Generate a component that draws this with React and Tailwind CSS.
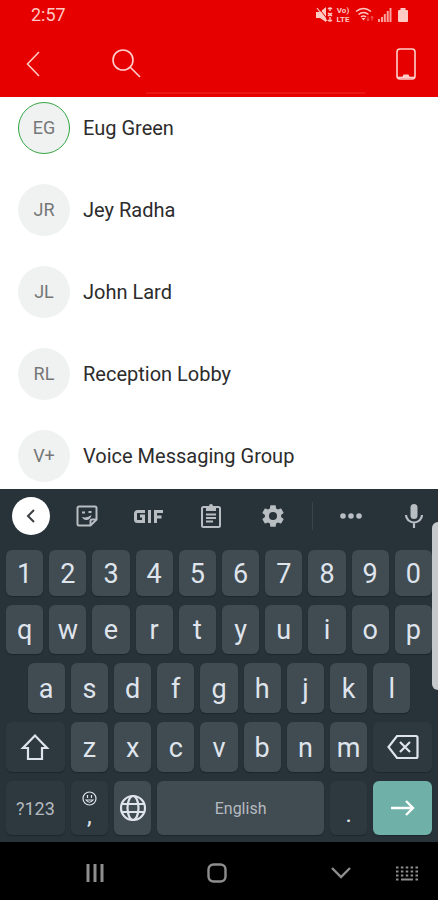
const contacts = [
  { initials: 'EG', name: 'Eug Green', online: true },
  { initials: 'JR', name: 'Jey Radha' },
  { initials: 'JL', name: 'John Lard' },
  { initials: 'RL', name: 'Reception Lobby' },
  { initials: 'V+', name: 'Voice Messaging Group' },
];

function StatusBar() {
  return (
    <div className="flex h-[30px] items-center justify-between pl-[31px] pr-[29px] text-[#ffc9c4]">
      <span className="text-lg leading-5">2:57</span>
      <div className="flex items-center">
        <svg width="17" height="16" viewBox="0 0 17 16" fill="currentColor">
          <path d="M0 5h4l6-5v15l-6-4H0z" />
          <path d="M2 0l10 13" stroke="#e60000" strokeWidth="1" />
          <path d="M1 1l10 13" stroke="currentColor" strokeWidth="1.200" />
          <path d="M12 2q2-2 4 0M12 6q2 2 4 0M12 9q2-2 4 0M12 13q2 2 4 0M14 1v3M14 10v3" fill="none" stroke="currentColor" strokeWidth="1.4" />
        </svg>
        <span className="ml-[2px] flex w-4 flex-col items-center text-[8px] leading-[9px] font-bold">
          <span>Vo)</span>
          <span>LTE</span>
        </span>
        <svg className="ml-1" width="20" height="16" viewBox="0 0 20 16" fill="none" stroke="currentColor" strokeWidth="1.6">
          <path d="M1 4.5q7.500-6 15 0M3.500 7.500q5-4 10 0M6 10q2.500-2 5 0" />
          <path d="M6.500 11h4l-2 2.500z" fill="currentColor" stroke="none" />
          <path d="M13 9.500v4M11.800 12.300l1.200 1.300 1.200-1.300M17 13.500v-4M15.800 10.700l1.200-1.300 1.200 1.300" strokeWidth="1" opacity=".5" />
        </svg>
        <svg className="ml-[3px]" width="14" height="16" viewBox="0 0 14 16" fill="currentColor">
          <path d="M0 12h2v3H0zM3 10h2v5H3zM5.800 7h2v8h-2zM8.700 4h2v11h-2zM11.500 1h2v14h-2z" opacity=".8" />
        </svg>
        <svg className="ml-[5px]" width="12" height="16" viewBox="0 0 12 16" fill="currentColor">
          <path d="M3.500 1h5v2h1.500a1 1 0 0 1 1 1v10a1 1 0 0 1-1 1H2a1 1 0 0 1-1-1V4a1 1 0 0 1 1-1h1.500z" />
        </svg>
      </div>
    </div>
  );
}

function SearchHeader() {
  return (
    <header className="bg-[#e60000]">
      <StatusBar />
      <div className="flex h-[67px] items-center pl-5 pr-[22px] text-[#ffd0cc]">
        <button type="button" aria-label="Back" className="flex w-7 justify-center">
          <svg width="16" height="26" viewBox="0 0 16 26" fill="none" stroke="currentColor" strokeWidth="1.5">
            <path d="M13 1L1.500 13 13 25" />
          </svg>
        </button>
        <label htmlFor="search" aria-label="Search" className="ml-16 shrink-0">
          <svg width="29" height="30" viewBox="0 0 29 30" fill="none" stroke="currentColor" strokeWidth="1.6">
            <circle cx="11" cy="11" r="10" />
            <path d="M18 18l10 10" />
          </svg>
        </label>
        <input id="search" type="text" className="mb-[3px] ml-[5px] min-w-0 flex-1 self-end border-b-2 border-[#ea1616] bg-transparent pb-1 text-lg text-white outline-none" />
        <button type="button" aria-label="Phone" className="ml-[31px]">
          <svg width="20" height="32" viewBox="0 0 20 32" fill="none" stroke="currentColor" strokeWidth="1.6">
            <rect x="1" y="1" width="18" height="30" rx="3" />
            <path d="M1 29.500h18" />
            <path d="M6 30l1.500-3.500h5L14 30z" fill="currentColor" stroke="none" />
          </svg>
        </button>
      </div>
    </header>
  );
}

function ContactList() {
  return (
    <ul className="flex flex-col gap-[30px] bg-white pt-[5px] pb-[7px]">
      {contacts.map((contact) => (
        <li key={contact.name}>
          <button type="button" className="flex w-full items-center pl-[18px] text-left">
            <span
              className={`flex size-[52px] items-center justify-center rounded-full bg-[#f0f2f2] text-lg text-[#757777] ${
                contact.online ? 'border border-[#35a544]' : ''
              }`}
            >
              {contact.initials}
            </span>
            <span className="ml-[13px] text-xl text-[#2c2c2c]">{contact.name}</span>
          </button>
        </li>
      ))}
    </ul>
  );
}

function KeyboardToolbar() {
  return (
    <div className="grid h-[61px] grid-cols-[62fr_50fr_72fr_54fr_70fr_8fr_70fr_52fr] items-center justify-items-center pb-[7px] text-[#b8bec2]">
      <button type="button" aria-label="Close toolbar" className="flex size-[38px] items-center justify-center rounded-full bg-white text-[#3c4043]">
        <svg width="10" height="14" viewBox="0 0 10 14" fill="none" stroke="currentColor" strokeWidth="2">
          <path d="M8 1L2 7l6 6" />
        </svg>
      </button>
      <button type="button" aria-label="Stickers">
        <svg width="22" height="22" viewBox="0 0 22 22" fill="none" stroke="currentColor" strokeWidth="2">
          <path d="M3 1.500h16a1.500 1.500 0 0 1 1.500 1.500v11.500L14.500 20.500H3A1.500 1.500 0 0 1 1.500 19V3A1.500 1.500 0 0 1 3 1.500z" />
          <path d="M14.500 20v-4a1.500 1.500 0 0 1 1.500-1.500h4" />
          <path d="M6 12q5 1.500 9.500-2-1 4.500-4.500 5t-5-3z" fill="currentColor" stroke="none" />
          <path d="M6 7.500h3M12.500 7h3" />
        </svg>
      </button>
      <button type="button" aria-label="GIF">
        <svg width="29" height="13" viewBox="0 0 29 13" fill="none" stroke="currentColor" strokeWidth="3">
          <path d="M11 1.500H3.500a2 2 0 0 0-2 2v6a2 2 0 0 0 2 2h6V6H6M15.500 0v13M21.500 13V1.500H29M22 7h5.500" />
        </svg>
      </button>
      <button type="button" aria-label="Clipboard">
        <svg width="20" height="24" viewBox="0 0 20 24" fill="none" stroke="currentColor" strokeWidth="2">
          <rect x="1" y="3" width="18" height="20" rx="1.500" />
          <path d="M5 2h3a2 2 0 0 1 4 0h3v5H5z" fill="currentColor" stroke="none" />
          <path d="M5 10.500h10M5 14h10M5 17.500h7" />
        </svg>
      </button>
      <button type="button" aria-label="Settings">
        <svg width="26" height="26" viewBox="0 0 24 24" fill="currentColor">
          <path
            fillRule="evenodd"
            d="M19.430 12.980c.040-.320.070-.640.070-.980s-.030-.660-.070-.980l2.110-1.650c.190-.150.240-.420.120-.640l-2-3.460c-.120-.220-.390-.300-.610-.220l-2.490 1c-.520-.400-1.080-.730-1.690-.980l-.380-2.650A.488.488 0 0 0 14 2h-4c-.250 0-.460.180-.490.420l-.380 2.650c-.610.250-1.170.590-1.690.980l-2.490-1c-.230-.090-.490 0-.610.220l-2 3.460c-.130.220-.070.490.120.640l2.110 1.650c-.040.320-.070.650-.070.980s.030.660.070.980l-2.110 1.650c-.190.150-.240.420-.120.640l2 3.460c.120.220.390.300.610.220l2.490-1c.520.400 1.080.730 1.690.980l.380 2.650c.030.240.240.420.490.420h4c.250 0 .460-.180.490-.420l.380-2.650c.610-.250 1.170-.590 1.690-.980l2.490 1c.230.090.490 0 .610-.220l2-3.460c.120-.220.070-.490-.120-.640zM12 15.700a3.700 3.700 0 1 1 0-7.400 3.700 3.700 0 0 1 0 7.400z"
          />
        </svg>
      </button>
      <span className="h-7 w-px bg-[#38444b]" />
      <button type="button" aria-label="More">
        <svg width="22" height="6" viewBox="0 0 22 6" fill="currentColor">
          <circle cx="3" cy="3" r="2.800" />
          <circle cx="11" cy="3" r="2.800" />
          <circle cx="19" cy="3" r="2.800" />
        </svg>
      </button>
      <button type="button" aria-label="Voice input" className="pl-1">
        <svg width="20" height="26" viewBox="0 0 20 26" fill="none" stroke="currentColor" strokeWidth="2.200">
          <rect x="6.500" y="1" width="7" height="15" rx="3.500" fill="currentColor" stroke="none" />
          <path d="M2 12a8 7.500 0 0 0 16 0M10 19.500V25" />
        </svg>
      </button>
    </div>
  );
}

function Key({ className = '', ...props }) {
  return (
    <button
      type="button"
      className={`flex items-center justify-center rounded-md shadow-[0_1px_1px_#1d272d] ${className}`}
      {...props}
    />
  );
}

function LetterKeys({ letters, className = '' }) {
  return letters.split('').map((letter, i) => (
    <Key key={letter} className={`col-span-2 bg-[#414b52] pt-px text-[27px] leading-8 ${i === 0 ? className : ''}`}>
      {letter}
    </Key>
  ));
}

function Keyboard() {
  return (
    <section aria-label="Keyboard" className="relative bg-[#273239] pb-[7px] text-[#dfe4ec]">
      <KeyboardToolbar />
      <div className="flex flex-col gap-[9px] px-[6px]">
        <div className="grid h-[46px] grid-cols-20 gap-[6px]">
          <LetterKeys letters="1234567890" />
        </div>
        <div className="grid h-[49px] grid-cols-20 gap-[6px]">
          <LetterKeys letters="qwertyuiop" />
        </div>
        <div className="grid h-[50px] grid-cols-20 gap-[6px]">
          <LetterKeys letters="asdfghjkl" className="col-start-2" />
        </div>
        <div className="grid h-[50px] grid-cols-20 gap-[6px]">
          <Key aria-label="Shift" className="col-span-3 bg-[#2d393f]">
            <svg width="30" height="28" viewBox="0 0 30 28" fill="none" stroke="currentColor" strokeWidth="2.200">
              <path d="M15 2.500L3 15h5v11h14V15h5z" />
            </svg>
          </Key>
          <LetterKeys letters="zxcvbnm" />
          <Key aria-label="Backspace" className="col-span-3 bg-[#2d393f]">
            <svg width="32" height="26" viewBox="0 0 32 26" fill="none" stroke="currentColor" strokeWidth="2.200">
              <path d="M10 2h19a1.500 1.500 0 0 1 1.500 1.500v19a1.500 1.500 0 0 1-1.500 1.500H10L1.500 13z" />
              <path d="M13 8l10 10M23 8L13 18" />
            </svg>
          </Key>
        </div>
        <div className="grid h-[54px] grid-cols-20 gap-[6px]">
          <Key className="col-span-3 bg-[#2d393f] pt-[2px] text-lg text-[#b4babf]">?123</Key>
          <Key className="col-span-2 flex-col bg-[#2d393f] text-2xl leading-5">
            <svg width="15" height="15" viewBox="0 0 15 15" fill="none" stroke="currentColor" strokeWidth="1.200">
              <circle cx="7.500" cy="7.500" r="6.500" />
              <path d="M5.500 4v3M9.500 4v3M4 9h7q-3.500 4.500-7 0z" />
            </svg>
            ,
          </Key>
          <Key aria-label="Change language" className="col-span-2 bg-[#414b52]">
            <svg width="28" height="28" viewBox="0 0 28 28" fill="none" stroke="currentColor" strokeWidth="2.200">
              <circle cx="14" cy="14" r="12" />
              <ellipse cx="14" cy="14" rx="5.500" ry="12" />
              <path d="M3 10h22M3 18h22" />
            </svg>
          </Key>
          <Key className="col-span-8 bg-[#414b52] pt-[2px] text-base text-[#b4babf]">English</Key>
          <Key className="col-span-2 bg-[#2d393f] pt-3 text-2xl">.</Key>
          <Key aria-label="Enter" className="col-span-3 bg-[#6fb0a9] text-white">
            <svg width="24" height="16" viewBox="0 0 24 16" fill="none" stroke="currentColor" strokeWidth="2.400">
              <path d="M0 8h22M15 1l7 7-7 7" />
            </svg>
          </Key>
        </div>
      </div>
      <span className="absolute top-[33px] right-0 h-[168px] w-[6px] rounded-l-md bg-[#c6c9cb]" />
    </section>
  );
}

function NavigationBar() {
  return (
    <nav className="grid h-[58px] grid-cols-[190fr_54fr_70fr_54fr_70fr] items-center justify-items-center bg-black pt-1 text-[#8e8e8e]">
      <button type="button" aria-label="Recent apps">
        <svg width="18" height="18" viewBox="0 0 18 18" fill="none" stroke="currentColor" strokeWidth="3">
          <path d="M2 0v18M9 0v18M16 0v18" />
        </svg>
      </button>
      <button type="button" aria-label="Home">
        <svg width="20" height="20" viewBox="0 0 20 20" fill="none" stroke="currentColor" strokeWidth="2.400">
          <rect x="1.500" y="1.500" width="17" height="17" rx="5" />
        </svg>
      </button>
      <button type="button" aria-label="Hide keyboard" className="col-start-4">
        <svg width="20" height="12" viewBox="0 0 20 12" fill="none" stroke="currentColor" strokeWidth="2.400">
          <path d="M1 1l9 9 9-9" />
        </svg>
      </button>
      <button type="button" aria-label="Switch keyboard" className="pl-2">
        <svg width="24" height="15" viewBox="0 0 24 15" fill="none" stroke="currentColor" strokeWidth="2.200">
          <path d="M1 1.500h22M1 5.500h22M1 9.500h22" strokeDasharray="2.500 2.375" />
          <path d="M1 13.500h2.500M6 13.500h12M20.500 13.500H23" />
        </svg>
      </button>
    </nav>
  );
}

export default function App() {
  return (
    <div className="w-full font-['Roboto',sans-serif]">
      <SearchHeader />
      <main>
        <ContactList />
      </main>
      <Keyboard />
      <NavigationBar />
    </div>
  );
}
